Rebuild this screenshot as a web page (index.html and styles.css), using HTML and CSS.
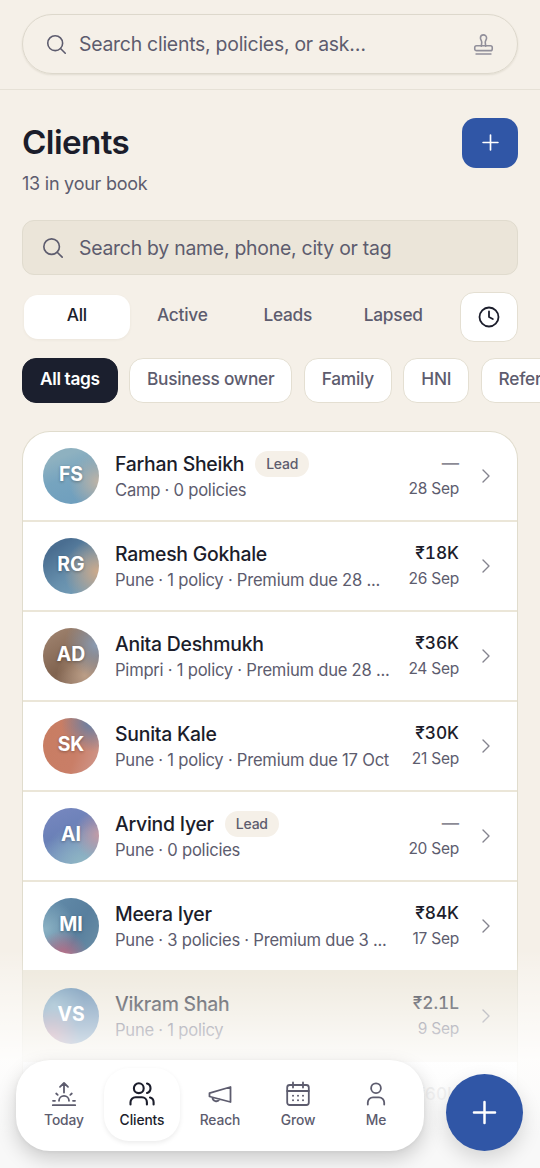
FILE: index.html
```html
<!DOCTYPE html>
<html lang="en">
<head>
<meta charset="utf-8">
<meta name="viewport" content="width=device-width">
<title>Clients</title>
<link rel="stylesheet" href="styles.css">
</head>
<body>
<div class="app">
  <header class="topbar">
    <div class="ask">
      <svg class="ic ask-search" viewBox="0 0 24 24"><circle cx="10.5" cy="10.5" r="8.500"/><path d="M16.600 16.600 22 22"/></svg>
      <span class="ask-text">Search clients, policies, or ask…</span>
      <svg class="ic stamp" viewBox="0 0 24 24"><path d="M9.5 14 10 9.5C10 7.5 8.500 6.500 8.500 4.500a3.500 3.500 0 0 1 7 0c0 2-1.500 3-1.500 5l.5 4.500"/><rect x="2" y="13.500" width="20" height="5.500" rx="2"/><path d="M3.500 22.800h17"/></svg>
    </div>
  </header>
  <main class="page">
    <div class="heading">
      <div>
        <h1>Clients</h1>
        <p class="count">13 in your book</p>
      </div>
      <button class="add"><svg class="ic" viewBox="0 0 24 24"><path d="M12 3.500v17M3.500 12h17"/></svg></button>
    </div>
    <div class="filter">
      <svg class="ic filter-icon" viewBox="0 0 24 24"><circle cx="10.500" cy="10.500" r="8.500"/><path d="M16.600 16.600 22 22"/></svg>
      <span>Search by name, phone, city or tag</span>
    </div>
    <div class="status">
      <div class="tabs"><span class="tab on">All</span><span class="tab">Active</span><span class="tab">Leads</span><span class="tab">Lapsed</span></div>
      <button class="recent"><svg class="ic" viewBox="0 0 24 24"><circle cx="12" cy="12" r="9.500"/><path d="M12 6.500V12l3.800 2"/></svg></button>
    </div>
    <div class="tags"><span class="tag dark">All tags</span><span class="tag">Business owner</span><span class="tag">Family</span><span class="tag">HNI</span><span class="tag">Referral</span></div>
    <div class="list">
      <div class="row"><div class="avatar fs">FS</div><div class="who"><div class="name">Farhan Sheikh<span class="badge">Lead</span></div><div class="meta">Camp · 0 policies</div></div><div class="sum"><div class="amt none">—</div><div class="date">28 Sep</div></div><svg class="ic chev" viewBox="0 0 8 14"><path d="m1 1 6 6-6 6"/></svg></div>
      <div class="row"><div class="avatar rg">RG</div><div class="who"><div class="name">Ramesh Gokhale</div><div class="meta">Pune · 1 policy · Premium due 28 ...</div></div><div class="sum"><div class="amt">₹18K</div><div class="date">26 Sep</div></div><svg class="ic chev" viewBox="0 0 8 14"><path d="m1 1 6 6-6 6"/></svg></div>
      <div class="row"><div class="avatar ad">AD</div><div class="who"><div class="name">Anita Deshmukh</div><div class="meta">Pimpri · 1 policy · Premium due 28 ...</div></div><div class="sum"><div class="amt">₹36K</div><div class="date">24 Sep</div></div><svg class="ic chev" viewBox="0 0 8 14"><path d="m1 1 6 6-6 6"/></svg></div>
      <div class="row"><div class="avatar sk">SK</div><div class="who"><div class="name">Sunita Kale</div><div class="meta">Pune · 1 policy · Premium due 17 Oct</div></div><div class="sum"><div class="amt">₹30K</div><div class="date">21 Sep</div></div><svg class="ic chev" viewBox="0 0 8 14"><path d="m1 1 6 6-6 6"/></svg></div>
      <div class="row"><div class="avatar ai">AI</div><div class="who"><div class="name">Arvind Iyer<span class="badge">Lead</span></div><div class="meta">Pune · 0 policies</div></div><div class="sum"><div class="amt none">—</div><div class="date">20 Sep</div></div><svg class="ic chev" viewBox="0 0 8 14"><path d="m1 1 6 6-6 6"/></svg></div>
      <div class="row"><div class="avatar mi">MI</div><div class="who"><div class="name">Meera Iyer</div><div class="meta">Pune · 3 policies · Premium due 3 ...</div></div><div class="sum"><div class="amt">₹84K</div><div class="date">17 Sep</div></div><svg class="ic chev" viewBox="0 0 8 14"><path d="m1 1 6 6-6 6"/></svg></div>
      <div class="row pressed"><div class="avatar vs">VS</div><div class="who"><div class="name">Vikram Shah</div><div class="meta">Pune · 1 policy</div></div><div class="sum"><div class="amt">₹2.1L</div><div class="date">9 Sep</div></div><svg class="ic chev" viewBox="0 0 8 14"><path d="m1 1 6 6-6 6"/></svg></div>
      <div class="row last"><div class="who"></div><div class="sum"><div class="amt">₹60K</div><div class="date">&nbsp;</div></div><svg class="ic chev" viewBox="0 0 8 14"></svg></div>
    </div>
  </main>
  <div class="fade"></div>
  <div class="dock">
    <nav class="nav">
      <a class="item"><svg class="ic" viewBox="0 0 24 24"><path d="M12 10.500V1M8 4.800 12 1l4 3.800M.8 23.200h22.400M1 18.800h2M21 18.800h2M4.200 11.500l1.500 1.400M19.800 11.500l-1.500 1.400M7 18.800a5 5 0 0 1 10 0"/></svg><span>Today</span></a>
      <a class="item on"><svg class="ic" viewBox="0 0 24 24"><circle cx="8.800" cy="6.200" r="4.900"/><path d="M.5 22.500v-2.200a5 5 0 0 1 5-5h6.400a5 5 0 0 1 5 5v2.200M17 1.500a4.900 4.900 0 0 1 0 9.400M20 15.600a4.900 4.900 0 0 1 3.600 4.700v2.200"/></svg><span>Clients</span></a>
      <a class="item"><svg class="ic" viewBox="0 0 24 24"><path d="M1.500 11.200 22.500 5v15L1.500 14.500ZM11.500 17.200a3.700 3.700 0 0 1-7-1.800"/></svg><span>Reach</span></a>
      <a class="item"><svg class="ic" viewBox="0 0 24 24"><rect x="1.200" y="3" width="21.600" height="20" rx="2.500"/><path d="M1.200 9h21.600M7 .5V5.500M17 .5V5.500"/><path d="M7 13.800h.01M12 13.800h.01M17 13.800h.01M7 18.300h.01M12 18.300h.01M17 18.300h.01" class="dots"/></svg><span>Grow</span></a>
      <a class="item"><svg class="ic" viewBox="0 0 24 24"><circle cx="12" cy="6.200" r="4.900"/><path d="M3.800 22.500v-2a5.200 5.200 0 0 1 5.200-5.200h6a5.200 5.200 0 0 1 5.200 5.200v2"/></svg><span>Me</span></a>
    </nav>
    <button class="fab"><svg class="ic" viewBox="0 0 24 24"><path d="M12 1v22M1 12h22"/></svg></button>
  </div>
</div>
</body>
</html>
```
FILE: styles.css
```css
* { box-sizing: border-box; }
body { margin: 0; background: #f5f0e8; font-family: Inter, "Noto Sans", sans-serif; color: #1b1d2b; }
.app { position: relative; height: 1168px; overflow: hidden; letter-spacing: -.24px; }
button { border: 0; padding: 0; display: flex; align-items: center; justify-content: center; font: inherit; }
.ic { display: block; flex: none; fill: none; stroke: currentColor; stroke-width: 1.8; stroke-linecap: round; stroke-linejoin: round; }

.topbar { height: 90px; padding: 14px 22px 0; border-bottom: 1.500px solid #e6e1d6; }
.ask { height: 60px; border: 1.500px solid #ddd8cc; border-radius: 30px; box-shadow: 0 1px 2px rgba(80, 70, 40, .12); display: flex; align-items: center; padding: 0 23px 0 23px; color: #5d5c6e; }
.ask-search { width: 21px; height: 21px; }
.ask-text { flex: 1; margin-left: 12px; font-size: 19.400px; line-height: 26px; }
.stamp { width: 21px; height: 21px; color: #918f9a; overflow: visible; }

.page { padding: 28px 22px 0; }
.heading { display: flex; justify-content: space-between; align-items: flex-start; height: 102px; }
h1 { margin: 3px 0 0; font-size: 33.200px; line-height: 42px; font-weight: 600; letter-spacing: -.6px; }
.count { margin: 9px 0 0; font-size: 18px; line-height: 24px; color: #5d5c6e; }
.add { width: 56px; height: 50px; border-radius: 14px; background: #3056a6; color: #fff; }
.add .ic { width: 21px; height: 21px; margin-top: -1px; stroke-width: 1.900; }
.filter { height: 55px; border: 1.500px solid #e0dbce; border-radius: 12px; background: #ebe5d9; display: flex; align-items: center; padding-left: 19px; gap: 15px; font-size: 19.400px; color: #5d5c6e; }
.filter-icon { width: 22px; height: 22px; }
.status { display: flex; justify-content: space-between; margin-top: 17px; height: 50px; }
.tabs { display: flex; width: 424px; padding: 3px 0 3px 2px; height: 50px; }
.tab { flex: 1; border-radius: 14px; text-align: center; font-size: 17.300px; font-weight: 500; line-height: 40px; color: #5d5c6e; }
.tab.on { background: #fff; color: #1b1d2b; box-shadow: 0 1px 3px rgba(80, 70, 40, .06); }
.recent { width: 58px; height: 50px; border: 1.500px solid #e4dfd2; border-radius: 14px; background: #fff; color: #1b1d2b; }
.recent .ic { width: 24px; height: 24px; }
.tags { display: flex; gap: 11.300px; margin: 16px -22px 0 0; overflow: hidden; }
.tag { flex: none; height: 45px; padding: 0 17px; border: 1.500px solid #e4dfd2; border-radius: 14px; background: #fff; color: #5d5c6e; font-size: 17.300px; font-weight: 500; line-height: 39px; }
.tag.dark { background: #1b1f2e; border-color: #1b1f2e; color: #fff; font-weight: 600; letter-spacing: -.35px; }

.list { margin-top: 28px; border: 1.500px solid #e0dccd; border-bottom: 0; border-radius: 28px 28px 0 0; overflow: hidden; background: #fff; height: 760px; }
.row { display: flex; align-items: center; height: 90px; padding: 0 27px 0 20px; border-bottom: 2px solid #ebe6d8; }
.row.pressed { background: #ebe5d7; }
.row.last { border-bottom: 0; }
.avatar { width: 56px; height: 56px; flex: none; border-radius: 50%; display: flex; align-items: center; justify-content: center; padding-bottom: 4px; color: #fff; font-size: 19.400px; font-weight: 700; letter-spacing: 0; text-shadow: 0 1px 3px rgba(0, 0, 0, .3); }
.fs { background: radial-gradient(circle at 98% 60%, #bdb3a6 0, #bdb3a600 45%), linear-gradient(160deg, #8eb1c0 20%, #76a4bf 50%, #6d9dbd); }
.rg { background: radial-gradient(circle at 96% 60%, #cba98b 0, #cba98b00 52%), linear-gradient(145deg, #4a6e91 20%, #6790ad 60%, #7aa3bb); }
.ad { background: radial-gradient(circle at 95% 30%, #8b9cb3 0, #8b9cb300 48%), radial-gradient(circle at 75% 85%, #bb9e87 0, #bb9e8700 45%), linear-gradient(150deg, #a38773, #80634f 60%, #927665); }
.sk { background: radial-gradient(circle at 85% 8%, #667fa5 0, #667fa500 42%), linear-gradient(110deg, #c87d62, #c97e67 60%, #d09a90); }
.ai { background: radial-gradient(circle at 100% 48%, #c39ca6 0, #c39ca600 40%), radial-gradient(circle at 70% 100%, #8fb6c3 0, #8fb6c300 60%), linear-gradient(160deg, #7888c0, #6a80b7 45%, #83a6c8); }
.mi { background: radial-gradient(circle at 35% 105%, #c26c83 0, #c26c8300 38%), radial-gradient(circle at 5% 55%, #8ab1c3 0, #8ab1c300 50%), linear-gradient(120deg, #648dab, #587f9e 60%, #6b8fa6); }
.vs { background: radial-gradient(circle at 15% 88%, #b07b90 0, #b07b9000 42%), radial-gradient(circle at 20% 30%, #7ba5bd 0, #7ba5bd00 50%), #5681a8; text-shadow: none; }
.who { flex: 1; min-width: 0; margin-left: 16px; white-space: nowrap; }
.name { display: flex; align-items: center; height: 27px; font-size: 19.400px; font-weight: 500; }
.badge { height: 26px; line-height: 26px; margin-left: 11px; padding: 0 11px; border-radius: 13px; background: #f5f0e8; color: #5d5c6e; font-size: 14px; font-weight: 500; }
.meta { height: 24px; line-height: 24px; font-size: 16.600px; color: #5d5c6e; }
.sum { text-align: right; margin-right: 23px; padding-bottom: 2px; white-space: nowrap; }
.amt { font-size: 17.300px; line-height: 26px; font-weight: 500; letter-spacing: 0; font-variant-numeric: tabular-nums; }
.amt.none { color: #8b8a94; }
.date { font-size: 15.500px; line-height: 25px; color: #5d5c6e; }
.chev { width: 8px; height: 14px; color: #85848f; stroke-width: 1.400; overflow: visible; }

/* Content dissolves to white beneath the floating dock */
.fade { position: absolute; left: 0; right: 0; bottom: 0; height: 218px; background: linear-gradient(to bottom, rgba(255, 255, 255, 0) 0, rgba(255, 255, 255, .22) 10%, rgba(255, 255, 255, .43) 24%, rgba(255, 255, 255, .62) 36%, rgba(255, 255, 255, .86) 50%, rgba(252, 252, 252, .95) 65%, #f8f8f8 85%); }
.dock { position: absolute; left: 16px; right: 17px; bottom: 17px; display: flex; align-items: flex-end; justify-content: space-between; }
.nav { width: 408px; height: 91px; padding: 8px 9px 10px; display: flex; border-radius: 34px; background: #fff; box-shadow: 0 8px 20px rgba(0, 0, 0, .18), 0 1px 4px rgba(0, 0, 0, .05); }
.item { flex: 1; display: flex; flex-direction: column; align-items: center; padding-top: 14px; gap: 5px; margin: 0 1px; border-radius: 25px; color: #5d5c6e; font-size: 13.800px; font-weight: 500; line-height: 18px; letter-spacing: -.1px; }
.item .ic { width: 24px; height: 24px; overflow: visible; }
.item.on { color: #1b1d2b; box-shadow: 0 2px 5px rgba(0, 0, 0, .08); }
.item.on .ic { stroke-width: 2.100; }
.item .dots { stroke-width: 2; }
.fab { width: 77px; height: 77px; border-radius: 50%; background: #3056a6; color: #fff; box-shadow: 0 8px 20px rgba(0, 0, 0, .14); }
.fab .ic { width: 23px; height: 23px; stroke-width: 2.600; overflow: visible; }
```
